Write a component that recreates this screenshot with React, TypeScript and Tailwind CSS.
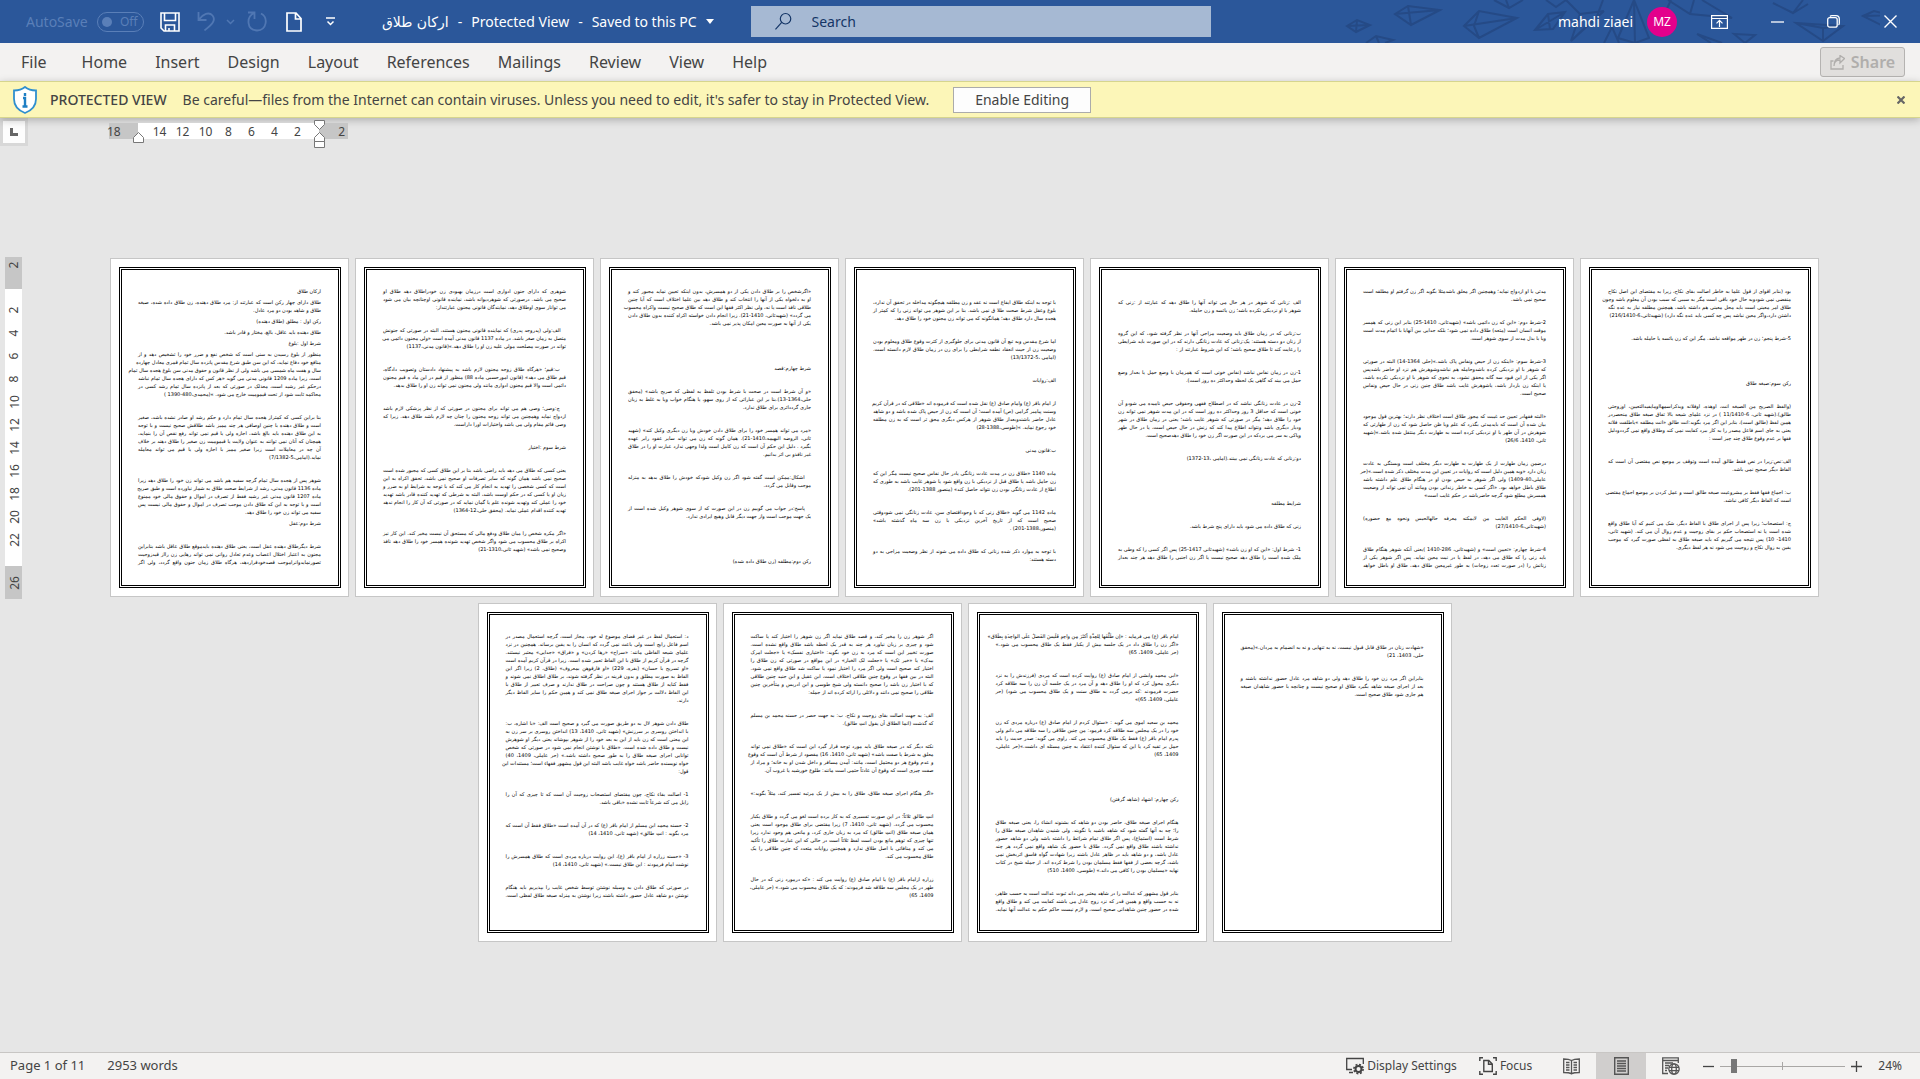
import React from "react";
import clsx from "clsx";

type Gap = "none" | "line" | "para" | "section" | "lead";
type Block = { gap: Gap; lines: string[]; flush?: boolean };

const gapClass: Record<Gap, string> = {
  none: "",
  line: "mt-[3px]",
  lead: "mt-[11px]",
  para: "mt-[15px]",
  section: "mt-[37px]",
};

const pages: Block[][] = [
  [
    { gap: "none", lines: ["ارکان طلاق"] },
    {
      gap: "line",
      lines: [
        "طلاق دارای چهار رکن است که عبارتند از: مرد طلاق دهنده، زن طلاق داده شده، صیغه",
        "طلاق و شاهد بودن دو مرد عادل.",
      ],
    },
    { gap: "line", lines: ["رکن اول : مطلق (طلاق دهنده)"] },
    { gap: "line", lines: ["طلاق دهنده باید عاقل، بالغ، مختار و قادر باشد."] },
    { gap: "line", lines: ["شرط اول :بلوغ"] },
    {
      gap: "line",
      lines: [
        "منظور از بلوغ رسیدن به سنی است که شخص نفع و ضرر خود را تشخیص دهد و از",
        "منافع خود دفاع نماید، که این سن طبق شرع مقدس پانزده سال تمام قمری معادل چهارده",
        "سال و هفت ماه شمسی می باشد ولی از نظر قانون و حقوق مدنی سن بلوغ هجده سال تمام",
        "است، زیرا ماده 1209 قانونی مدنی می گوید «هر کس که دارای هجده سال تمام نباشد",
        "درحکم غیر رشید است، معذلک در صورتی که بعد از پانزده سال تمام رشد کسی در",
        "محاکمه ثابت شود از تحت قیمومیت خارج می شود. »(محمدی،480-1390 )",
      ],
    },
    {
      gap: "para",
      lines: [
        "بنا براین کسی که کمتراز هجده سال تمام دارد و حکم رشد او صادر نشده باشد، صغیر",
        "است و طلاق دهنده با چنین اوصافی هر چند ممیز باشد طلاقش صحیح نیست و با توجه",
        "به این طلاق دهنده باید بالغ باشد، اجازه ولی یا قیم نمی تواند رفع نقص آن را بنماید،",
        "همچنان که آنان نمی توانند به عنوان ولایت یا قیمومیت زن صغیر را طلاق دهند بر خلاف",
        "آن چه در معاملات است زیرا صغیر ممیز با اجازه ولی یا قیم می تواند معامله",
        "نماید.(امامی،5-7/1382)",
      ],
    },
    {
      gap: "para",
      lines: [
        "شوهر پس از هجده سال تمام گرچه سفیه هم باشد می تواند زن خود را طلاق دهد زیرا",
        "ماده 1136 قانون مدنی، رشد از شرایط صحت طلاق به شمار نیاورده است و طبق صریح",
        "ماده 1207 قانون مدنی غیر رشید فقط از تصرف در اموال و حقوق مالی خود ممنوع",
        "است و با توجه به این که طلاق دادن موجب تصرف در اموال و حقوق مالی نیست پس",
        "سفیه می تواند زن خود را طلاق دهد.",
      ],
    },
    { gap: "line", lines: ["شرط دوم:عقل"] },
    {
      gap: "para",
      flush: true,
      lines: [
        "شرط دیگرطلاق دهنده عقل است، یعنی طلاق دهنده بایدموقع طلاق عاقل باشد بنابراین",
        "مجنون به اعتبار اختلال اعصاب وعدم تعادل روانی نمی تواند رهایی زن رااز قیدزوجیت",
        "تصورنمایدوانراموجب قصدخودقراردهد، هرگاه طلاق زمان جنون واقع گردد، ولی اگر",
      ],
    },
  ],
  [
    {
      gap: "none",
      lines: [
        "شوهری که دارای جنون ادواری است درزمان بهبودی زن خودراطلاق دهد طلاق او",
        "صحیح می باشد. درصورتی که شوهردیوانه باشد، نماینده قانونی اوچنانچه بیان می شود",
        "می تواناز سوی اوطلاق دهد، نمایندگان قانونی مجنون عبارتنداز:",
      ],
    },
    {
      gap: "para",
      lines: [
        "   الف:ولی (پدروجد پدری) که نماینده قانونی مجنون هستند، البته در صورتی که جنونش",
        "متصل به زمان صغر باشد. در ماده 1137 قانون مدنی آمده است «ولی مجنون دائمی می",
        "تواند در صورت مصلحت مولی علیه زن او را طلاق دهد.»(قانون مدنی،1137)",
      ],
    },
    {
      gap: "para",
      lines: [
        "   ب:قیم؛ «هرگاه طلاق زوجه مجنون لازم باشد به پیشنهاد دادستان وتصویب دادگاه،",
        "قیم طلاق می دهد» (قانون امورحسبی ماده 88) منظور از قیم در این ماد ه قیم مجنون",
        "دائمی است والا قیم مجنون ادواری مانند ولی مجنون نمی تواند زن او را طلاق بدهد.",
      ],
    },
    {
      gap: "para",
      lines: [
        "   ج:وصی؛ وصی هم می تواند برای مجنون در صورتی که از نظر پزشکی لازم باشد",
        "ازدواج نماید وهمچنین می تواند زوجه مجنون را چنان چه لازم باشد طلاق دهد. زیرا که",
        "وصی قائم مقام ولی می باشد واختیارات اورا داراست.",
      ],
    },
    { gap: "para", lines: ["شرط سوم :اختیار"] },
    {
      gap: "para",
      lines: [
        "یعنی کسی که طلاق می دهد باید راضی باشد بنا بر این طلاق کسی که مجبور شده است",
        "صحیح نمی باشد همان گونه که سایر تصرفات او صحیح نمی باشد، تحقق اکراه به این",
        "است که کسی شخصی را تهدید به انجام کار می کند که با توجه به شرایط او به ضرر و",
        "زیان او یا کسی که در حکم اوست باشد، البته به شرطی که تهدید کننده قادر باشد تهدید",
        "خود را عملی کند وتهدید شونده علم یا گمان نماید که در صورتی که آن کار را انجام ندهد",
        "تهدید کننده اقدام عملی نماید. (محقق حلی،12-1364)",
      ],
    },
    {
      gap: "para",
      lines: [
        "«اگر مکره شخص را میان طلاق ودفع مالی که مستحق آن نیست مخیر کند. این کار نیز",
        "اکراه بر طلاق محسوب می شود واگر شخص تهدید شونده همسر خود را طلاق دهد نافذ",
        "وصحیح نمی باشد» (شهید ثانی،1310-21)",
      ],
    },
  ],
  [
    {
      gap: "none",
      lines: [
        "«اگرشخص را بر طلاق دادن یکی از دو همسرش، بدون اینکه تعیین نماید مجبور کند و",
        "او به دلخواه یکی از آنها را انتخاب کند و طلاق دهد بین علما اختلاف است که آیا چنین",
        "طلاقی نافذ است یا نه، ولی نظر اکثر فقها این است که طلاق صحیح نیست واکراه محسوب",
        "می گردد» (شهیدثانی، 1410-21). زیرا انجام دادن خواسته اکراه کننده بدون طلاق دادن",
        "یکی از آنها به صورت معین امکان پذیر نمی باشد.",
      ],
    },
    { gap: "section", lines: ["شرط چهارم:قصد"] },
    {
      gap: "para",
      lines: [
        "«و آن شرط است در صحت با شرط بودن تلفظ به لفظی که صریح باشد» (محقق",
        "حلی،1364-13).بنا بر این عباراتی که از روی سهو، یا هنگام خواب ویا به غلط به زبان",
        "جاری گردداثری برای طلاق ندارد.",
      ],
    },
    {
      gap: "para",
      lines: [
        "«مرد می تواند همسر خود را برای طلاق دادن خودش ویا زن دیگری وکیل کند» (شهید",
        "ثانی، الروضه البهیمه،1410-21). همان گونه که زن می تواند سایر عقود رابر عهده",
        "بگیرد . دلیل این حکم آن است که زن کامل است ولذا وجهی ندارد عبارت او را در طلاق",
        "غیر نافذو بی اثر بدانیم.",
      ],
    },
    {
      gap: "para",
      lines: [
        "   اشکال:ممکن است گفته شود اگر زن وکیل شودکه خودش را طلاق بدهد به منزله",
        "موجب وقابل می گردد.",
      ],
    },
    {
      gap: "para",
      lines: [
        "   پاسخ:در جواب می گوییم زن در این صورت که از سوی شوهر وکیل شده است از",
        "یک جهت موجب است واز جهت دیگر قابل وهیچ ایرادی ندارد.",
      ],
    },
    { gap: "section", lines: ["رکن دوم:مطلقه (زن طلاق داده شده)"] },
  ],
  [
    {
      gap: "lead",
      lines: [
        "با توجه به اینکه طلاق ایقاع است نه عقد و زن مطلقه هیچگونه مداخله در تحقق آن ندارد،",
        "بلوغ وعقل شرط صحت طلا ق نمی باشد. بنا بر این شوهر می تواند زنی را که کمتر از",
        "هجده سال دارد طلاق دهد؛ همانگونه که می تواند زن مجنون خود را طلاق دهد.",
      ],
    },
    {
      gap: "para",
      lines: [
        "اما شرع مقدس وبه تبع آن قانون مدنی برای جلوگیری از کثرت وقوع طلاق ومعلوم بودن",
        "وضعیت زن از حیث انعقاد نطفه شرایطی را برای زن در زمان طلاق لازم دانسته است.",
        "(امامی ،5-13/1372)",
      ],
    },
    { gap: "para", lines: ["الف:روایات"] },
    {
      gap: "para",
      lines: [
        "از امام باقر (ع) وامام صادق (ع) نقل شده است که فرموده اند «طلاقی که در قرآن کریم",
        "وسنت پیامبر گرامی (ص) آمده است؛ آن است که زن از حیض پاک شده باشد و دو شاهد",
        "عادل حاضر باشندوبعداز طلاق شوهر از هرکس دیگری محق تر است که به زن مطلقه",
        "خود رجوع نماید. »(طوسی،1388-28)",
      ],
    },
    { gap: "para", lines: ["ب:قانون مدنی"] },
    {
      gap: "para",
      lines: [
        "ماده 1140 «طلاق زن در مدت عادت زنانگی یادر حال نفاس صحیح نیست مگر این که",
        "زن حامل باشد یا طلاق قبل از نزدیکی با زن واقع شود یا شوهر غایب باشد به طوری که",
        "اطلاع از عادت زنانگی بودن زن نتواند حاصل کند» (منصور 1388-201).",
      ],
    },
    {
      gap: "para",
      lines: [
        "ماده 1142 می گوید «طلاق زنی که با وجوداقتضای سن، عادت زنانگی نمی شودوقتی",
        "صحیح است که از تاریخ آخرین نزدیکی با زن سه ماه گذشته باشد»",
        "(منصور،1388-201) .",
      ],
    },
    {
      gap: "para",
      lines: [
        "با توجه به موارد ذکر شده زنانی که طلاق داده می شوند از نظر وضعیت مزاجی به دو",
        "دسته هستند:",
      ],
    },
  ],
  [
    {
      gap: "lead",
      lines: [
        "الف :زنانی که شوهر در هر حال می تواند آنها را طلاق دهد که عبارتند از :زنی که",
        "شوهر با او نزدیکی نکرده باشد؛ زن یائسه و زن حامله.",
      ],
    },
    {
      gap: "para",
      lines: [
        "ب:زنانی که در زمان طلاق باید وضعیت مزاجی آنها در نظر گرفته شود، که این گروه",
        "از زنان دو دسته هستند: یک:زنانی که عادت زنانگی دارند که در این صورت باید شرایطی",
        "را رعایت کند تا طلاق صحیح باشد؛ که این شروط عبارتند از :",
      ],
    },
    {
      gap: "para",
      lines: [
        "1-زن در زمان نفاس نباشد (نفاس خونی است که همزمان با وضع حمل یا بعداز وضع",
        "حمل می بیند که گاهی یک لحظه وحداکثر ده روز است).",
      ],
    },
    {
      gap: "para",
      lines: [
        "2-زن در عادت زنانگی نباشد که در اصطلاح فقهی وحقوقی حیض نامیده می شودو آن",
        "خونی است که حداقل 3 روز وحداکثر ده روز است که در این مدت شوهر نمی تواند زن",
        "خود را طلاق دهد؛ مگر در صورتی که شوهر غایب باشد؛ یعنی در زمان طلاق در شهر",
        "ودیار دیگری باشد ونتواند اطلاع پیدا کند که زنش در حال حیض است، یا در حال طهر",
        "وپاکی به سر می بردکه در این صورت اگر زن خود را طلاق دهدصحیح است.",
      ],
    },
    { gap: "para", lines: ["دو:زنانی که عادت زنانگی نمی بینند.(امامی ،13-1372)"] },
    { gap: "section", lines: ["شرایط مطلقه"] },
    { gap: "para", lines: ["زنی که طلاق داده می شود باید دارای پنج شرط باشد."] },
    {
      gap: "para",
      flush: true,
      lines: [
        "1- شرط اول: «این که او زن باشد» (شهیدثانی 1417-25) پس اگر کسی را که وطی به",
        "ملک شده است را طلاق دهد صحیح نیست یا اگر زن اجنبی را طلاق دهد هر چند بعداز",
      ],
    },
  ],
  [
    {
      gap: "none",
      lines: [
        "مدتی با او ازدواج نماید؛ وهمچنین اگر معلق باشدمثلا بگوید اگر زن گرفتم او مطلقه است",
        "صحیح نمی باشد.",
      ],
    },
    {
      gap: "para",
      lines: [
        "2-شرط دوم: «این که زن دائمی باشد» (شهیدثانی، 1410-25) بنابر این زنی که همسر",
        "موقت انسان است (متعه) طلاق داده نمی شود؛ بلکه جدایی بین آنهایا با اتمام مدت است",
        "ویا با بذل مدت از سوی شوهر است.",
      ],
    },
    {
      gap: "para",
      lines: [
        "3-شرط سوم: «اینکه زن از حیض ونفاس پاک باشد.»(حلی 1364-14) البته در صورتی",
        "که شوهر با او نزدیکی کرده باشدوحامله هم نباشدوشوهرش هم نزد او حاضر باشدپس",
        "اگر یکی از این قیود سه گانه محقق نشود، به نحوی که شوهر با او نزدیکی نکرده باشد،",
        "یا اینکه زن باردار باشد، یاشوهرش غایب باشد طلاق چنین زنی در حال حیض ونفاس",
        "صحیح است.",
      ],
    },
    {
      gap: "para",
      lines: [
        "«البته فقهادر تعیین حد غیبت که مجوز طلاق است اختلاف نظر دارند؛ بهترین قول موجود",
        "بیان شده آن است که بایدمدتی بگذرد که علم ویا ظن حاصل شود که زن از طهارتی که",
        "شوهرش در آن طهر با او نزدیکی کرده است به طهارت دیگر منتقل شده باشد.»(شهید",
        "ثانی، 1410، 26/6)",
      ],
    },
    {
      gap: "para",
      lines: [
        "درضمن زمان طهارت از یک طهارت به طهارت دیگر مختلف است وبستگی به عادت",
        "زنان دارد «وبه همین دلیل است که روایات در تعیین این مدت مختلف ذکر شده است.»(حر",
        "عاملی،40-1409) ولی اگر شوهر به حیض بودن او در هنگام طلاق علم داشته باشد",
        "طلاق باطل خواهد بود. «اگر کسی به خاطر زندانی بودن ومانند آن نمی تواند از وضعیت",
        "همسرش مطلع شود گرچه حاضرباشد در حکم غایب است»",
      ],
    },
    {
      gap: "para",
      lines: [
        "(لاوفی الحکم الغایب من لایمکنه معرفه حالهالحیس ونحوه مع حضوره)",
        "(شهیدثانی،6-27/1410)",
      ],
    },
    {
      gap: "para",
      flush: true,
      lines: [
        "4-شرط چهارم: «تعیین است» و (شهیدثانی، 286-1410 )یعنی آنکه شوهر هنگام طلاق",
        "باید زنی را که طلاق می دهد، در لفظ یا در نیت معین نماید. پس اگر شوهر یکی از",
        "زنانش را (در صورت تعدد زوجات) به طور غیرمعین طلاق دهد، طلاق او باطل خواهد",
      ],
    },
  ],
  [
    {
      gap: "none",
      lines: [
        "بود (بنابر اقوای از قول علما به خاطر اصالت بقای نکاح، زیرا به مقتضای این اصل نکاح",
        "منقضی نمی شودوبه حال خود باقی است مگر به سببی که سبب بودن آن معلوم باشد وچون",
        "طلاق امر معینی است باید محل معینی هم داشته باشد، همچنین مطلقه نیاز به عده نگه",
        "داشتن دارد،واگر معین نباشد پس چه کسی باید عده نگه دارد) (شهیدثانی،6-216/1410)",
      ],
    },
    { gap: "para", lines: ["5-شرط پنجم؛ زن در طهر مواقعه نباشد. مگر این که زن یائسه یا حامله باشد."] },
    { gap: "section", lines: ["رکن سوم:صیغه طلاق"] },
    {
      gap: "para",
      lines: [
        "(والفظ الصریح من الصیغه انت، اوهذه، اوفلانه ویذکراسمهااومایفیدالتعیین، اوزوجتی",
        "طالق).(شهید ثانی، 6-11/1410 ) در نزد علمای شیعه بالا تفاق صیغه طلاق منحصردر",
        "همین لفظ (طالق است)، بنابر این اگر مرد بگوید:انت طالق «انت مطلقه »یاطلقت فلانه",
        "یعنی به جای اسم فاعل مصدر را به کار ببرد کفایت نمی کند وطلاق واقع نمی گرددودلیل",
        "فقها بر عدم وقوع طلاق چند چیز است :",
      ],
    },
    {
      gap: "para",
      lines: [
        "الف:نص:زیرا در نص فقط طالق آمده است وتوقف بر موضع نص مقتضی آن است که",
        "الفاظ دیگر صحیح نمی باشد.",
      ],
    },
    {
      gap: "para",
      lines: [
        "ب: اجماع فقها فقط بر مشروعیت صیغه طالق است و عمل کردن بر موضع اجماع مقتضی",
        "است که الفاظ دیگر کافی نباشد.",
      ],
    },
    {
      gap: "para",
      lines: [
        "ج: استصحاب؛ زیرا پس از اجرای طلاق با الفاظ دیگر، شک می کنیم که آیا طلاق واقع",
        "شده است یا نه استصحاب حکم بر بقای زوجیت و عدم زوال آن می کند. (شهید ثانی،",
        "1410- 10) پس نتیجه می گیریم که باید صیغه طلاق به لفظی صورت گیرد که موجب",
        "یقین به زوال نکاح و زوجیت می شود نه هر لفظ دیگری.",
      ],
    },
  ],
  [
    {
      gap: "none",
      lines: [
        "د: استعمال لفظ در غیر قضای موضوع له خود، مجاز است، گرچه استعمال مصدر در",
        "اسم فاعل رایج است ولی باعث نمی گردد که انسان را به یقین برساند. همچنین در نزد",
        "علمای شیعه الفاظی مانند: «سراح» «رها کردن» و «فراق» «جدایی» معتبر نیستند.",
        "گرچه در قرآن کریم از طلاق با این الفاظ تعبیر شده است. زیرا در قرآن کریم آمده است",
        "«او تسریح با حسان» (بقره، 229) «او فارقوهن بمعروف» (طلاق، 2) زیرا اگر این",
        "الفاظ به صورت مطلق و بدون قرینه در نظر گرفته شوند، بر طلاق اطلاق نمی شوند و",
        "فقط کنایه از طلاق هستند و چون صراحت در طلاق ندارند و صرف تعبیر از طلاق با",
        "این الفاظ دلالت بر جواز اجرای صیغه طلاق نمی کند و همین حکم را سایر الفاظ دیگر",
        "دارند.",
      ],
    },
    {
      gap: "para",
      lines: [
        "طلاق دادن شوهر لال به دو طریق صورت می گیرد و صحیح است الف: «با اشاره، ب:",
        "با انداختن روسری بر سرزنش» (شهید ثانی، 1410، 13) انداختن روسری بر سر زن به",
        "این معنی است که زن باید از این به بعد خود را از شوهر بپوشاند یعنی دیگر او شوهرش",
        "نیست و طلاق داده شده است. «طلاق با نوشتن انجام نمی شود در صورتی که شخص",
        "توانایی اجرای صیغه طلاق را به طور صحیح داشته باشد.» (حر عاملی، 1409، 40)",
        "خواه نویسنده حاضر باشد خواه غایب باشد البته این قول مشهور فقهاء است؛ مستندات این",
        "قول:",
      ],
    },
    {
      gap: "para",
      lines: [
        "1- اصالت بقاء نکاح، چون مقتضای استصحاب زوجیت آن است که تا چیزی که آن را",
        "زایل می کند شرعاً ثابت نشده «باقی باشد.",
      ],
    },
    {
      gap: "para",
      lines: [
        "2- حسنه محمد ابن مسلم از امام باقر (ع) که در آن آمده است «طلاق فقط آن است که",
        "مرد بگوید : انتِ طالق» (شهید ثانی، 1410، 14)",
      ],
    },
    {
      gap: "para",
      lines: [
        "3- «حسنه زراره از امام باقر (ع)، این روایت درباره مردی است که طلاق همسرش را",
        "نوشت امام فرمودند : این طلاق نیست.» (شهید ثانی، 1410، 14)",
      ],
    },
    {
      gap: "para",
      flush: true,
      lines: [
        "در صورتی که طلاق دادن به وسیله نوشتن توسط شخص غایب را بپذیریم باید هنگام",
        "نوشتن دو شاهد عادل حضور داشته باشند زیرا نوشتن به منزله صیغه طلاق لفظی است.",
      ],
    },
  ],
  [
    {
      gap: "none",
      lines: [
        "اگر شوهر زن را مخیر کند، و قصد طلاق نماید اگر زن شوهر را اختیار کند یا ساکت",
        "شود و چیزی بر زبان نیاورد هر چند به قدر یک لحظه باشد طلاق واقع نشده است.",
        "صورت تخییر این است که مرد به زن خود بگوید: «اختیاری نفسک» یا «جعلت امرک",
        "بیدک» یا «خیر تک» یا «جعلت لک الخیار» در این مواقع در صورتی که زن طلاق را",
        "اختیار کند صحیح است ولی اگر مرد را اختیار نمود یا ساکت شد طلاق واقع نمی شود.",
        "البته در بین فقها در وقوع چنین طلاقی اختلاف است، ابن عقیل و ابن جنید چنین طلاقی",
        "که با اختیار زن باشد را صحیح دانسته ولی شیخ طوسی و ابن ادریس و متأخرین چنین",
        "طلاقی را صحیح نمی دانند و دلائلی را ارائه کرده اند از جمله:",
      ],
    },
    {
      gap: "para",
      lines: [
        "الف: به جهت اصالت بقای زوجیت و نکاح. ب: به جهت حصر در حسنه محمد بن مسلم",
        "که گذشت (انما الطلاق أن یقول انتِ طالق).",
      ],
    },
    {
      gap: "para",
      lines: [
        "نکته دیگر که در صیغه طلاق باید مورد توجه قرار گیرد این است که «طلاق نمی تواند",
        "معلق به شرط یا صفت باشد» (شهید ثانی، 1410، 16) مقصود از شرط آن است که وقوع",
        "و عدم وقوع هر دو محتمل است، مانند: آمدن مسافر و داخل شدن او به خانه؛ و مراد از",
        "صفت چیزی است که وقوع آن عادتاً حتمی است مانند: طلوع خورشید یا غروب آن.",
      ],
    },
    {
      gap: "para",
      flush: true,
      lines: ["«اگر هنگام اجرای صیغه طلاق، طلاق را به بیش از یک مرتبه تفسیر کند، مثلاً بگوید:»"],
    },
    {
      gap: "para",
      lines: [
        "انتِ طالق ثلاثاً؛ در این صورت تفسیری که به کار برده است لغو می گردد و طلاق یکبار",
        "محسوب می گردد. (شهید ثانی، 1410، 7) زیرا مقتضی برای طلاق موجود است یعنی",
        "همان صیغه طلاق (انتِ طالق) که مرد به زبان جاری کرد، و مانعی هم وجود ندارد زیرا",
        "تنها چیزی که توهم مانع بودن است لفظ ثلاثاً است در حالی که این عبارت طلاق را تأکید",
        "می کند و منافاتی با اصل طلاق ندارد و همچنین روایات متعدد که چنین طلاقی را یک",
        "طلاق محسوب می کند.",
      ],
    },
    {
      gap: "para",
      lines: [
        "زراره ازامام باقر (ع) یا امام صادق (ع) روایت می کند : «که درمورد زنی که در حال",
        "طهر در یک مجلس سه طلاقه شد فرمودند: که یک طلاق محسوب می شود.» (حر عاملی،",
        "1409، 65)",
      ],
    },
  ],
  [
    {
      gap: "none",
      lines: [
        "امام باقر (ع) می فرماید : «إن طَلَّقَها لِلعِدَّةِ أکثَرَ مِن واحِدٍ فَلَیسَ الفَضلُ علَی الواحِدَةِ بِطَلاق»",
        "«اگر زن را طلاق داد در یک جلسه بیش از یکبار فقط یک طلاق محسوب می شود.»",
        "(حر عاملی، 1409، 65)",
      ],
    },
    {
      gap: "para",
      lines: [
        "«ابی محمد وابشی از امام صادق (ع) روایت کرده است که مردی (فرزندش را به نزد",
        "دیگری محول کرد که او را طلاق دهد و آن مرد در یک جلسه آن زن را سه طلاقه کرد",
        "حضرت فرمودند :که برمی گردد به طلاق سنت و یک طلاق محسوب می شود) (حر",
        "عاملی، 1409، 65)»",
      ],
    },
    {
      gap: "para",
      lines: [
        "محمد بن سعید اموی می گوید : «سئوال کردم از امام صادق (ع) درباره مردی که زن",
        "خود را در یک مجلس سه طلاقه کرد فرمود: من چنین طلاقی را سه طلاقه می دانم ولی",
        "پدرم امام باقر (ع) فقط یک طلاق محسوب می کند. راوی می گوید: صدر حدیث را باید",
        "حمل بر تقیه کرد یا این که سئوال کننده اعتقاد به چنین مسئله ای داشت.»(حر عاملی،",
        "1409، 65)",
      ],
    },
    { gap: "section", lines: ["رکن چهارم: اشهاد (شاهد گرفتن)"] },
    {
      gap: "para",
      lines: [
        "هنگام اجرای صیغه طلاق، حاضر بودن دو شاهد که بشنوند انشاء را، یعنی صیغه طلاق",
        "را؛ چه به آنها گفته شود که شاهد باشید یا نگویند. ولی شنیدن شاهدان صیغه طلاق را",
        "شرط است (استماع)، پس اگر طلاق تمام شرائط را داشته باشد ولی دو شاهد حضور",
        "نداشته باشند طلاق واقع نمی گردد. طلاق با حضور یک شاهد واقع نمی گردد هر چند",
        "عادل باشد، و دو شاهد باید در ظاهر عادل باشند زیرا شهادت گواه فاسق اثربخش نمی",
        "باشد، گرچه بعضی از فقها فقط مسلمان بودن را شرط کرده اند. از جمله شیخ در کتاب",
        "نهایه «مسلمان بودن را کافی می داند.» (طوسی، 1400، 510)",
      ],
    },
    {
      gap: "para",
      flush: true,
      lines: [
        "بنابر قول مشهور که عدالت را در شاهد معتبر می داند ثبوت عدالت است به حسب ظاهر،",
        "نه به حسب واقع و همین قدر که نزد زوج عادل می باشند کفایت می کند و طلاق واقع",
        "شده در حضور چنین شاهدانی صحیح است، و لازم نیست حاکم حکم به عدالت آنها نماید.",
      ],
    },
  ],
  [
    {
      gap: "lead",
      lines: [
        "«شهادت زنان در طلاق قابل قبول نیست، نه به تنهایی و نه به انضمام به مردان.»(محقق",
        "حلی، 1403، 21)",
      ],
    },
    {
      gap: "para",
      lines: [
        "بنابراین اگر مرد زن خود را طلاق دهد ولی دو شاهد مرد عادل حضور نداشته باشند و",
        "بعد از اجرای صیغه شاهد بگیرد طلاق او صحیح نیست و چنانچه با حضور شاهدان صیغه",
        "هم جاری شود طلاق صحیح است.",
      ],
    },
  ],
];

const tabs = ["Home", "Insert", "Design", "Layout", "References", "Mailings", "Review", "View", "Help"];

function Page({ blocks }: { blocks: Block[] }) {
  return (
    <article className="h-[339px] w-[239px] border border-[#c6c6c6] bg-white p-2 pr-[7px]">
      <div
        dir="rtl"
        className="h-full overflow-hidden border-[3px] border-double border-black pt-[17px] pr-[17px] pl-4 text-[5px] leading-[8px] whitespace-pre text-black [font-family:'DejaVu_Sans',sans-serif]"
      >
        {blocks.map((block, i) => (
          <div key={i} className={gapClass[block.gap]}>
            {block.lines.map((line, j) => (
              <p
                key={j}
                className={clsx(
                  "h-2",
                  (block.flush || j < block.lines.length - 1) && "[text-align-last:justify]"
                )}
              >
                {line}
              </p>
            ))}
          </div>
        ))}
      </div>
    </article>
  );
}

function Origami() {
  return (
    <svg className="absolute top-0 right-[40px] h-full w-[540px]" viewBox="1340 0 540 43" fill="none" stroke="#254a86" strokeWidth="2">
      <path d="M1347 26l10-6 13 5-14 7zM1347 26l23-1M1357 20l-1 12M1395 14l13-8 32 4-29 15zM1395 14l45-4M1408 6l3 19M1366 43l10-7 17 4-8 3M1376 36l3 7" />
      <path d="M1464 26l15-15 38 7-38 20zM1464 26l53-8M1479 11l-5 15 5 12M1494 0l15 8 14-8M1506 0l3 8M1535 30l13-16 17-2-12 17zM1535 30l30-18M1548 14l2 15M1546 0l10 7 10-7" />
      <path d="M1566 0l14 14-9 27 26-25 6-16M1580 14l24-3M1571 41l33-30M1604 43l8-16 7 16M1618 38l16-38 15 38-14 5zM1634 0l1 43M1655 34l16-34M1668 0l22 14 42 4-30-18M1690 14l4-14" />
      <path d="M1697 34l25 9M1697 34l14 9M1734 34l21 1-10 8zM1773 3l20 10 15-9M1793 13l10-13M1796 23l47 3-20 15zM1796 23l27 5 20-2M1823 28v13M1863 16l11-5 17 4-10 10zM1863 16l28-1" />
    </svg>
  );
}

function TitleBar() {
  return (
    <header className="relative flex h-[43px] items-center bg-[#2b579a] text-sm text-white">
      <Origami />
      <label className="ml-[26px] flex w-[118px] items-center justify-between text-[#5a7fb8]">
        AutoSave
        <button disabled className="flex h-5 w-[47px] items-center gap-2 rounded-full border border-[#5a7fb8] px-1 text-xs">
          <span className="size-[10px] rounded-full bg-[#5a7fb8]" />
          Off
        </button>
      </label>
      <button aria-label="Save" className="ml-4">
        <svg className="size-[20px]" viewBox="0 0 20 20" fill="none" stroke="#fff" strokeWidth="1.6">
          <path d="M1 1h18v18H4l-3-3zM4.500 1v7.500h11V1M5.500 19v-6h9v6M9 19v-3" />
        </svg>
      </button>
      <button aria-label="Undo" disabled className="ml-[17px]">
        <svg className="h-[21px] w-[19px]" viewBox="0 0 19 21" fill="none" stroke="#5077b3" strokeWidth="1.8">
          <path d="M1.500 1v8h8M2 8.500C6 3 12 .5 15.500 4.500c4 5-1 9-8 15" />
        </svg>
      </button>
      <svg className="ml-[10px] h-[6px] w-[9px]" viewBox="0 0 9 6" fill="none" stroke="#5077b3" strokeWidth="1.5">
        <path d="M1 1l3.500 3.500L8 1" />
      </svg>
      <button aria-label="Repeat" disabled className="ml-3">
        <svg className="h-[21px] w-5" viewBox="0 0 20 21" fill="none" stroke="#5077b3" strokeWidth="1.8">
          <path d="M1 1.500h6.500V8M7 2C-1 6-.5 19 10 19.500c10-.5 11.500-13 4-17" />
        </svg>
      </button>
      <button aria-label="New document" className="ml-[19px]">
        <svg className="h-5 w-4" viewBox="0 0 16 20" fill="none" stroke="#fff" strokeWidth="1.7">
          <path d="M1 1h9l5 5.500V19H1zM9.500 1v6H15" />
        </svg>
      </button>
      <button aria-label="Customize toolbar" className="ml-6">
        <svg className="h-[9px] w-[9px]" viewBox="0 0 9 9" fill="none" stroke="#fff" strokeWidth="1.5">
          <path d="M0 1h9M1.500 4.500l3 3 3-3" />
        </svg>
      </button>
      <button className="ml-[47px] flex items-center gap-[9px]">
        <bdi className="[font-family:'DejaVu_Sans',sans-serif]">ارکان طلاق</bdi>
        <span>-</span>
        <span>Protected View</span>
        <span>-</span>
        <span>Saved to this PC</span>
        <svg className="h-[5px] w-2" viewBox="0 0 8 5" fill="#fff">
          <path d="M0 0h8L4 5z" />
        </svg>
      </button>
      <label className="absolute top-[6px] left-[751px] flex h-[31px] w-[460px] items-center gap-5 bg-[#a6b9d3] pl-6 text-[#143566]">
        <svg className="h-[19px] w-[18px]" viewBox="0 0 18 19" fill="none" stroke="#143566" strokeWidth="1.3">
          <circle cx="11.500" cy="6.500" r="5.700" />
          <path d="M7.300 10.500L.5 18" />
        </svg>
        <input placeholder="Search" aria-label="Search" className="w-full bg-transparent outline-none placeholder:text-[#143566]" />
      </label>
      <div className="relative ml-auto flex items-center">
        <span className="mr-[14px]">mahdi ziaei</span>
        <span className="mr-[34px] flex size-[30px] items-center justify-center rounded-full bg-[#e3008c] text-xs">MZ</span>
        <button aria-label="Ribbon display options" className="mr-[43px]">
          <svg className="h-[14px] w-[17px]" viewBox="0 0 17 14" fill="none" stroke="#fff" strokeWidth="1.200">
            <path d="M.6.6h15.800v12.800H.6zM.6 3.500h15.800M8.500 12V5.500M5.500 8.300l3-3 3 3" />
          </svg>
        </button>
        <button aria-label="Minimize" className="mr-[43px]">
          <svg className="h-[14px] w-[13px]" viewBox="0 0 13 14" stroke="#fff" strokeWidth="1.300">
            <path d="M0 7h13" />
          </svg>
        </button>
        <button aria-label="Restore" className="mr-11">
          <svg className="size-[13px]" viewBox="0 0 13 13" fill="none" stroke="#fff" strokeWidth="1.300">
            <rect x=".7" y="2.700" width="9.500" height="9.500" rx="2" />
            <path d="M3 1.500C3.500.8 4 .7 5 .7h4c2 0 3.300 1.300 3.300 3.300v4c0 1-.3 1.700-.8 2" />
          </svg>
        </button>
        <button aria-label="Close" className="mr-[23px]">
          <svg className="size-[13px]" viewBox="0 0 13 13" stroke="#fff" strokeWidth="1.400">
            <path d="M.5.5l12 12M12.500.5l-12 12" />
          </svg>
        </button>
      </div>
    </header>
  );
}

function MenuBar() {
  return (
    <nav className="flex h-[38px] items-center bg-[#f3f2f1] pl-[21px] text-base text-[#444]">
      <button className="mr-[35px]">File</button>
      <div className="flex gap-7">
        {tabs.map((tab) => (
          <button key={tab}>{tab}</button>
        ))}
      </div>
      <button
        disabled
        className="mr-[15px] ml-auto flex h-[30px] w-[85px] items-center justify-center gap-[6px] rounded-[3px] border border-[#b5b3b1] bg-[#e1dfdd] font-semibold text-[#b0aeac]"
      >
        <svg className="size-[15px]" viewBox="0 0 15 15" fill="none" stroke="#b0aeac" strokeWidth="1.300">
          <path d="M3.500 6H1v8h12v-4M4 11c0-4 2.500-6 6-6V8l4.500-4.500L10 .5V3C6 3.500 4 6 4 11z" />
        </svg>
        Share
      </button>
    </nav>
  );
}

function ProtectedBar() {
  return (
    <div className="relative flex h-[37px] items-center border-t border-b border-[#d6d58e] bg-[#fcf6b8] text-sm text-[#444] shadow-[0_2px_8px_rgba(0,0,0,0.25)]">
      <svg className="ml-[13px] h-7 w-6" viewBox="0 0 24 28" fill="none">
        <path d="M12 1c3 2.500 6.500 3.500 11 3.500V13c0 7-4.500 11.500-11 14C5.500 24.500 1 20 1 13V4.500C5.500 4.500 9 3.500 12 1z" fill="#fff" stroke="#2f8fcf" strokeWidth="1.800" />
        <path d="M12 7v3M10 12h2v8M9.500 20.500h5" stroke="#1e7fc4" strokeWidth="2.400" />
      </svg>
      <span className="ml-[13px] font-medium">PROTECTED VIEW</span>
      <span className="ml-4">
        Be careful—files from the Internet can contain viruses. Unless you need to edit, it's safer to stay in Protected View.
      </span>
      <button className="ml-6 h-[26px] w-[138px] border border-[#ababab] bg-[#fdfdfd]">Enable Editing</button>
      <button aria-label="Close message" className="mr-[15px] ml-auto">
        <svg className="size-2" viewBox="0 0 8 8" stroke="#666" strokeWidth="2.200">
          <path d="M.5.5l7 7M7.500.5l-7 7" />
        </svg>
      </button>
    </div>
  );
}

function HorizontalRuler() {
  return (
    <div className="flex h-[29px] items-start text-xs leading-[17px] text-[#444]">
      <div className="flex size-7 items-center justify-center border-[3px] border-[#d8d8d8] bg-[#fdfdfd]">
        <svg className="size-2" viewBox="0 0 8 8" fill="none" stroke="#666" strokeWidth="3">
          <path d="M1.500 0v6.500H8" />
        </svg>
      </div>
      <div className="relative mt-[5px] ml-[81px] flex h-4">
        <div className="w-[29px] bg-[#c6c6c6] -indent-0.5">18</div>
        <div className="grid w-[181px] grid-cols-7 bg-white px-[10px] text-center">
          {[14, 12, 10, 8, 6, 4, 2].map((n) => (
            <span key={n}>{n}</span>
          ))}
        </div>
        <div className="w-[29px] bg-[#c6c6c6] pr-[3px] text-right">2</div>
        <svg className="absolute top-[9px] left-6 h-[11px] w-[11px]" viewBox="0 0 11 11" fill="#fff" stroke="#777">
          <path d="M.5 10.500V5.500l5-5 5 5v5z" />
        </svg>
        <svg className="absolute -top-[3px] left-[205px] h-[28px] w-[11px]" viewBox="0 0 11 28" fill="#fff" stroke="#777">
          <path d="M.5.5h10v4l-5 5-5-5zM.5 21.500v-4l5-5 5 5v4zM.5 21.500h10v6H.5z" />
        </svg>
      </div>
    </div>
  );
}

function RulerNumber({ n }: { n: number }) {
  return (
    <span className="flex h-[23px] items-center justify-center pl-0.5">
      <span className="-rotate-90">{n}</span>
    </span>
  );
}

function VerticalRuler() {
  return (
    <aside className="mt-[110px] ml-[5px] flex w-[17px] flex-col self-start text-xs leading-4 text-[#444]">
      <div className="h-8 bg-[#c6c6c6]">
        <span className="flex h-4 items-center justify-center pl-0.5">
          <span className="-rotate-90">2</span>
        </span>
      </div>
      <div className="h-[277px] bg-white pt-[9px]">
        {[2, 4, 6, 8, 10, 12, 14, 16, 18, 20, 22].map((n) => (
          <RulerNumber key={n} n={n} />
        ))}
      </div>
      <div className="h-[33px] bg-[#c6c6c6] pt-[5px]">
        <RulerNumber n={26} />
      </div>
    </aside>
  );
}

function StatusBar() {
  return (
    <footer className="flex h-[27px] items-center border-t border-[#c8c6c4] bg-[#f3f2f1] pl-[10px] text-xs text-[#444]">
      <span className="text-[13px]">Page 1 of 11</span>
      <span className="ml-[22px] text-[13px]">2953 words</span>
      <button className="ml-auto flex items-center gap-[3px]">
        <svg className="h-[18px] w-[18px]" viewBox="0 0 18 18" fill="none" stroke="#444" strokeWidth="1.300">
          <path d="M6 12.500H.7V1.500h16.600V7M3 15.500h4" />
          <circle cx="12.500" cy="12" r="3" strokeWidth="2" />
          <circle cx="12.500" cy="12" r="4.600" strokeDasharray="2 1.600" strokeWidth="1.600" />
        </svg>
        Display Settings
      </button>
      <button className="ml-[22px] flex items-center gap-[3px]">
        <svg className="h-[18px] w-[18px]" viewBox="0 0 18 18" fill="none" stroke="#444" strokeWidth="1.400">
          <path d="M4 .8H.8V4M14 .8h3.200V4M4 17.200H.8V14M14 17.200h3.200V14M4.800 3.500h5l3.500 3.500v7.500H4.800zM9.500 3.500v3.800h3.800" />
        </svg>
        Focus
      </button>
      <button aria-label="Read mode" className="ml-[31px]">
        <svg className="h-[17px] w-[17px]" viewBox="0 0 17 17" fill="none" stroke="#555" strokeWidth="1.300">
          <path d="M8.500 2.500C6 1 3 1 .7 1v13.500c2.500 0 5.500 0 7.800 1.300 2.300-1.300 5.300-1.300 7.800-1.300V1C14 1 11 1 8.500 2.500zM8.500 2.500v14M3 4.500h3.500M3 7h3.500M3 9.500h3.500M3 12h3.500M10.500 4.500H14M10.500 7H14M10.500 9.500H14M10.500 12H14" />
        </svg>
      </button>
      <button aria-label="Print layout" className="ml-4 flex h-full w-[50px] items-center justify-center bg-[#d0cecd]">
        <svg className="h-[18px] w-[15px]" viewBox="0 0 15 18" fill="none" stroke="#555" strokeWidth="1.400">
          <path d="M.7.7h13.600v16.600H.7zM3 4h9M3 6.500h9M3 9h9M3 11.500h9M3 14h9" />
        </svg>
      </button>
      <button aria-label="Web layout" className="ml-4">
        <svg className="h-[18px] w-[18px]" viewBox="0 0 18 18" fill="none" stroke="#555" strokeWidth="1.300">
          <path d="M6 16.500H.7V.8h15.600V6M.7 3.500h15.600M3 6h8M3 8.500h4M3 11h3M3 13.500h2" />
          <circle cx="12" cy="12" r="5.200" />
          <ellipse cx="12" cy="12" rx="2.300" ry="5.200" />
          <path d="M7 10.300h10M7 13.700h10" />
        </svg>
      </button>
      <button aria-label="Zoom out" className="ml-[23px]">
        <svg className="size-[11px]" viewBox="0 0 11 11" stroke="#444" strokeWidth="1.300">
          <path d="M0 5.500h11" />
        </svg>
      </button>
      <input
        type="range"
        aria-label="Zoom"
        min={10}
        max={190}
        defaultValue={26}
        className="mx-[6px] h-[14px] w-[125px] appearance-none bg-[linear-gradient(#a9a7a5,#a9a7a5),linear-gradient(#a9a7a5,#a9a7a5)] bg-[size:100%_1px,1px_8px] bg-center bg-no-repeat [&::-webkit-slider-thumb]:h-[14px] [&::-webkit-slider-thumb]:w-[6px] [&::-webkit-slider-thumb]:appearance-none [&::-webkit-slider-thumb]:bg-[#777]"
      />
      <button aria-label="Zoom in">
        <svg className="size-[11px]" viewBox="0 0 11 11" stroke="#444" strokeWidth="1.300">
          <path d="M0 5.500h11M5.500 0v11" />
        </svg>
      </button>
      <span className="mr-[18px] ml-4">24%</span>
    </footer>
  );
}

export default function App() {
  return (
    <div className="flex min-h-screen flex-col bg-[#e6e6e6] [font-family:'Noto_Sans','DejaVu_Sans',sans-serif]">
      <TitleBar />
      <MenuBar />
      <ProtectedBar />
      <HorizontalRuler />
      <div className="flex flex-1">
        <VerticalRuler />
        <main className="flex flex-1 flex-wrap content-start justify-center gap-[6px] pt-[111px] pr-[13px]">
          {pages.map((blocks, i) => (
            <Page key={i} blocks={blocks} />
          ))}
        </main>
      </div>
      <StatusBar />
    </div>
  );
}
